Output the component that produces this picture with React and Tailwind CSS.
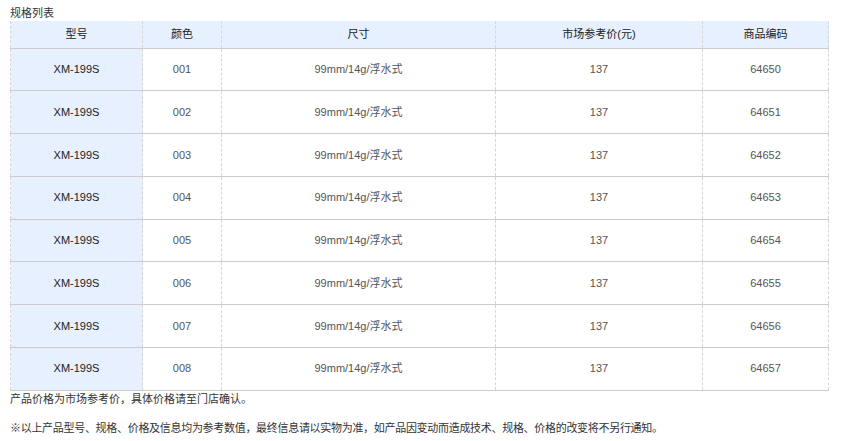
import React from "react";

const rows = [
  ["001", "64650"],
  ["002", "64651"],
  ["003", "64652"],
  ["004", "64653"],
  ["005", "64654"],
  ["006", "64655"],
  ["007", "64656"],
  ["008", "64657"],
];

const font = { fontFamily: '"Liberation Sans", Arial, "Noto Sans CJK SC", sans-serif' };

export default function App() {
  return (
    <div className="w-[850px] h-[441px] bg-white text-[11px] text-[#333]" style={font}>
      <div className="pl-[10px] pt-[5px] leading-[16px]">规格列表</div>
      <table className="ml-[10px] w-[818px] border-collapse table-fixed text-center">
        <colgroup>
          <col className="w-[132px]" />
          <col className="w-[79px]" />
          <col className="w-[274px]" />
          <col className="w-[207px]" />
          <col className="w-[126px]" />
        </colgroup>
        <thead>
          <tr className="h-[27px] bg-[#e6f0fe] text-[#222] border-b border-b-[#cccccc]">
            {["型号", "颜色", "尺寸", "市场参考价(元)", "商品编码"].map((h) => (
              <th key={h} className="font-normal border-x border-dashed border-x-[#d6d6d6] p-0">
                {h}
              </th>
            ))}
          </tr>
        </thead>
        <tbody>
          {rows.map(([c, code]) => (
            <tr key={c} className="h-[42.75px] border-b border-b-[#cccccc] text-[#555]">
              <td className="bg-[#e6f0fe] text-[#222] border-x border-dashed border-x-[#d6d6d6] p-0">XM-199S</td>
              <td className="border-x border-dashed border-x-[#d6d6d6] p-0">{c}</td>
              <td className="border-x border-dashed border-x-[#d6d6d6] p-0">99mm/14g/浮水式</td>
              <td className="border-x border-dashed border-x-[#d6d6d6] p-0">137</td>
              <td className="border-x border-dashed border-x-[#d6d6d6] p-0">{code}</td>
            </tr>
          ))}
        </tbody>
      </table>
      <div className="pl-[10px] leading-[16px] pt-0">产品价格为市场参考价，具体价格请至门店确认。</div>
      <div className="pl-[10px] leading-[16px] pt-[13px] tracking-[-0.3px]">
        ※以上产品型号、规格、价格及信息均为参考数值，最终信息请以实物为准，如产品因变动而造成技术、规格、价格的改变将不另行通知。
      </div>
    </div>
  );
}
